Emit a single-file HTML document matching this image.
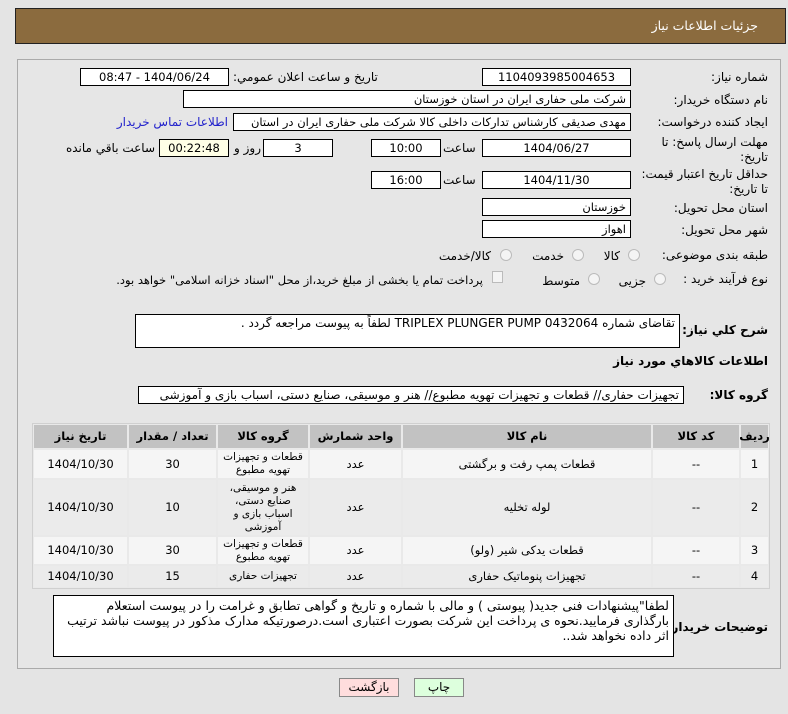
<!DOCTYPE html>
<html><head><meta charset="utf-8"><style>
*{margin:0;padding:0;box-sizing:border-box}
body{width:788px;height:714px;background:#e4e4e4;font-family:"DejaVu Sans","Liberation Sans",sans-serif;font-size:11px;color:#000;position:relative;overflow:hidden}
.a{position:absolute;white-space:nowrap}
.box{position:absolute;background:#fff;border:1px solid #000;direction:rtl;font-size:11.5px;line-height:16px;padding:0 4px;white-space:nowrap;overflow:hidden}
.c{text-align:center}
.lbl{position:absolute;direction:rtl;text-align:right;white-space:nowrap;font-size:12px}
.rad{position:absolute;width:12px;height:12px;border-radius:50%;border:1px solid #bbb;background:#f4f4f4}
.cell{position:absolute;display:flex;align-items:center;justify-content:center;text-align:center;direction:rtl;font-size:11.5px;line-height:13px;white-space:normal}
.h{background:#c2c2c2;font-weight:bold}
.o{background:#f5f5f5}
.e{background:#ebebeb}
</style></head><body>
<div class="a" style="left:15px;top:8px;width:771px;height:36px;background:#8b6b3e;border:1px solid #222"></div>
<div class="a" style="right:30px;top:18px;color:#fff;font-size:12.5px;direction:rtl">جزئیات اطلاعات نیاز</div>
<div class="a" style="left:17px;top:59px;width:764px;height:610px;border:1px solid #aaa;background:#e6e6e6"></div>

<div class="lbl" style="right:20px;top:70px">شماره نیاز:</div>
<div class="box c" style="left:482px;top:68px;width:149px;height:18px">1104093985004653</div>
<div class="lbl" style="left:233px;top:70px">تاریخ و ساعت اعلان عمومي:</div>
<div class="box c" style="left:80px;top:68px;width:149px;height:18px">1404/06/24 - 08:47</div>

<div class="lbl" style="right:20px;top:93px">نام دستگاه خریدار:</div>
<div class="box" style="left:183px;top:90px;width:448px;height:18px">شرکت ملی حفاری ایران در استان خوزستان</div>

<div class="lbl" style="right:20px;top:115px">ایجاد کننده درخواست:</div>
<div class="box" style="left:233px;top:113px;width:398px;height:18px">مهدی صدیقی کارشناس تدارکات داخلی کالا شرکت ملی حفاری ایران در استان</div>
<div class="lbl" style="right:560px;top:115px;color:#2222cc">اطلاعات تماس خریدار</div>

<div class="lbl" style="right:20px;top:135px;line-height:15px">مهلت ارسال پاسخ: تا<br>تاریخ:</div>
<div class="box c" style="left:482px;top:139px;width:149px;height:18px">1404/06/27</div>
<div class="lbl" style="left:443px;top:141px">ساعت</div>
<div class="box c" style="left:371px;top:139px;width:70px;height:18px">10:00</div>
<div class="box c" style="left:263px;top:139px;width:70px;height:18px">3</div>
<div class="lbl" style="left:234px;top:141px">روز و</div>
<div class="box c" style="left:159px;top:139px;width:70px;height:18px;background:#ffffe6">00:22:48</div>
<div class="lbl" style="right:633px;top:141px">ساعت باقي مانده</div>

<div class="lbl" style="right:20px;top:167px;line-height:15px">حداقل تاریخ اعتبار قیمت:<br>تا تاریخ:</div>
<div class="box c" style="left:482px;top:171px;width:149px;height:18px">1404/11/30</div>
<div class="lbl" style="left:443px;top:173px">ساعت</div>
<div class="box c" style="left:371px;top:171px;width:70px;height:18px">16:00</div>

<div class="lbl" style="right:20px;top:201px">استان محل تحویل:</div>
<div class="box" style="left:482px;top:198px;width:149px;height:18px">خوزستان</div>
<div class="lbl" style="right:20px;top:223px">شهر محل تحویل:</div>
<div class="box" style="left:482px;top:220px;width:149px;height:18px">اهواز</div>

<div class="lbl" style="right:20px;top:248px">طبقه بندی موضوعی:</div>
<div class="rad" style="left:628px;top:249px"></div><div class="lbl" style="right:168px;top:249px">کالا</div>
<div class="rad" style="left:572px;top:249px"></div><div class="lbl" style="right:224px;top:249px">خدمت</div>
<div class="rad" style="left:500px;top:249px"></div><div class="lbl" style="right:297px;top:249px">کالا/خدمت</div>

<div class="lbl" style="right:20px;top:272px">نوع فرآیند خرید :</div>
<div class="rad" style="left:654px;top:273px"></div><div class="lbl" style="right:142px;top:274px">جزیی</div>
<div class="rad" style="left:588px;top:273px"></div><div class="lbl" style="right:208px;top:274px">متوسط</div>
<div class="a" style="left:492px;top:271px;width:11px;height:12px;border:1px solid #bbb;background:#f4f4f4"></div>
<div class="lbl" style="right:305px;top:273px;font-size:11.5px">پرداخت تمام یا بخشی از مبلغ خرید،از محل "اسناد خزانه اسلامی" خواهد بود.</div>

<div class="lbl" style="right:20px;top:323px;font-weight:bold">شرح كلي نياز:</div>
<div class="box" style="left:135px;top:314px;width:545px;height:34px;font-size:12px">تقاضای شماره 0432064 TRIPLEX PLUNGER PUMP لطفاً به پیوست مراجعه گردد .</div>
<div class="lbl" style="right:20px;top:354px;font-weight:bold">اطلاعات كالاهاي مورد نياز</div>
<div class="lbl" style="right:20px;top:388px;font-weight:bold">گروه کالا:</div>
<div class="box" style="left:138px;top:386px;width:546px;height:18px;font-size:12px">تجهیزات حفاری//  قطعات و تجهیزات تهویه مطبوع// هنر و موسیقی، صنایع دستی، اسباب بازی و آموزشی</div>

<div class="a" style="left:32px;top:423px;width:738px;height:166px;background:#e9e9e9;border:1px solid #d0d0d0"></div>
<div class="cell h" style="left:741px;top:425px;width:27px;height:23px">ردیف</div>
<div class="cell h" style="left:653px;top:425px;width:86px;height:23px">کد کالا</div>
<div class="cell h" style="left:403px;top:425px;width:248px;height:23px">نام کالا</div>
<div class="cell h" style="left:310px;top:425px;width:91px;height:23px">واحد شمارش</div>
<div class="cell h" style="left:218px;top:425px;width:90px;height:23px">گروه کالا</div>
<div class="cell h" style="left:129px;top:425px;width:87px;height:23px">تعداد / مقدار</div>
<div class="cell h" style="left:34px;top:425px;width:93px;height:23px">تاریخ نیاز</div>

<div class="cell o" style="left:741px;top:450px;width:27px;height:28px">1</div>
<div class="cell o" style="left:653px;top:450px;width:86px;height:28px">--</div>
<div class="cell o" style="left:403px;top:450px;width:248px;height:28px">قطعات پمپ رفت و برگشتی</div>
<div class="cell o" style="left:310px;top:450px;width:91px;height:28px">عدد</div>
<div class="cell o" style="left:218px;top:450px;width:90px;height:28px;font-size:10.5px">قطعات و تجهیزات<br>تهویه مطبوع</div>
<div class="cell o" style="left:129px;top:450px;width:87px;height:28px">30</div>
<div class="cell o" style="left:34px;top:450px;width:93px;height:28px">1404/10/30</div>

<div class="cell e" style="left:741px;top:480px;width:27px;height:55px">2</div>
<div class="cell e" style="left:653px;top:480px;width:86px;height:55px">--</div>
<div class="cell e" style="left:403px;top:480px;width:248px;height:55px">لوله تخلیه</div>
<div class="cell e" style="left:310px;top:480px;width:91px;height:55px">عدد</div>
<div class="cell e" style="left:218px;top:480px;width:90px;height:55px;font-size:10.5px">هنر و موسیقی،<br>صنایع دستی،<br>اسباب بازی و<br>آموزشی</div>
<div class="cell e" style="left:129px;top:480px;width:87px;height:55px">10</div>
<div class="cell e" style="left:34px;top:480px;width:93px;height:55px">1404/10/30</div>

<div class="cell o" style="left:741px;top:537px;width:27px;height:27px">3</div>
<div class="cell o" style="left:653px;top:537px;width:86px;height:27px">--</div>
<div class="cell o" style="left:403px;top:537px;width:248px;height:27px">قطعات یدکی شیر (ولو)</div>
<div class="cell o" style="left:310px;top:537px;width:91px;height:27px">عدد</div>
<div class="cell o" style="left:218px;top:537px;width:90px;height:27px;font-size:10.5px">قطعات و تجهیزات<br>تهویه مطبوع</div>
<div class="cell o" style="left:129px;top:537px;width:87px;height:27px">30</div>
<div class="cell o" style="left:34px;top:537px;width:93px;height:27px">1404/10/30</div>

<div class="cell e" style="left:741px;top:566px;width:27px;height:21px">4</div>
<div class="cell e" style="left:653px;top:566px;width:86px;height:21px">--</div>
<div class="cell e" style="left:403px;top:566px;width:248px;height:21px">تجهیزات پنوماتیک حفاری</div>
<div class="cell e" style="left:310px;top:566px;width:91px;height:21px">عدد</div>
<div class="cell e" style="left:218px;top:566px;width:90px;height:21px;font-size:10.5px">تجهیزات حفاری</div>
<div class="cell e" style="left:129px;top:566px;width:87px;height:21px">15</div>
<div class="cell e" style="left:34px;top:566px;width:93px;height:21px">1404/10/30</div>

<div class="lbl" style="right:20px;top:620px;font-weight:bold">توضیحات خریدار:</div>
<div class="box" style="left:53px;top:595px;width:621px;height:62px;white-space:normal;line-height:15px;padding-top:2px;font-size:12.5px">لطفا"پیشنهادات فنی جدید( پیوستی ) و مالی با شماره و تاریخ و گواهی تطابق و غرامت را در پیوست استعلام بارگذاری فرمایید.نحوه ی پرداخت این شرکت بصورت اعتباری است.درصورتیکه مدارک مذکور در پیوست نباشد ترتیب اثر داده نخواهد شد..</div>

<div class="a c" style="left:339px;top:678px;width:60px;height:19px;background:#fdd;border:1px solid #888;line-height:17px;font-size:12px">بازگشت</div>
<div class="a c" style="left:414px;top:678px;width:50px;height:19px;background:#dfd;border:1px solid #888;line-height:17px;font-size:12px">چاپ</div>
</body></html>
